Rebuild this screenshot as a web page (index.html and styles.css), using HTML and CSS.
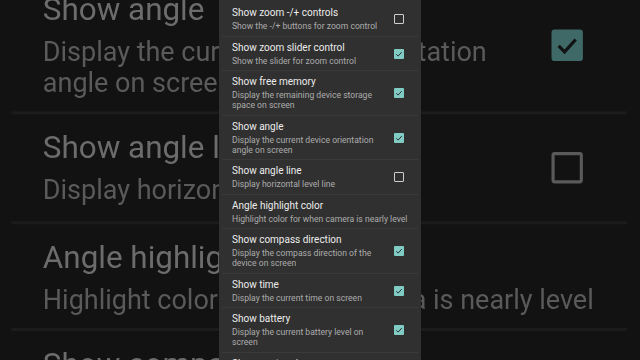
FILE: index.html
```html
<!DOCTYPE html>
<html lang="en">
<head>
    <meta charset="UTF-8">
    <meta name="viewport" content="width=device-width, initial-scale=1.0">
    <title>On screen GUI</title>
    <link rel="stylesheet" href="styles.css">
</head>
<body>
    <div class="backdrop" id="backdrop"></div>
    <div class="settings-list" id="settingsList">
        <div class="pref">
            <div class="pref-text">
                <div class="pref-title">Show zoom -/+ controls</div>
                <div class="pref-summary">Show the -/+ buttons for zoom control</div>
            </div>
            <span class="checkbox"></span>
        </div>
        <div class="pref">
            <div class="pref-text">
                <div class="pref-title">Show zoom slider control</div>
                <div class="pref-summary">Show the slider for zoom control</div>
            </div>
            <span class="checkbox checked"><svg viewBox="0 0 24 24"><path d="M5.5 12.5l4.5 4.5 8.5-9.5"/></svg></span>
        </div>
        <div class="pref">
            <div class="pref-text">
                <div class="pref-title">Show free memory</div>
                <div class="pref-summary">Display the remaining device storage space on screen</div>
            </div>
            <span class="checkbox checked"><svg viewBox="0 0 24 24"><path d="M5.5 12.5l4.5 4.5 8.5-9.5"/></svg></span>
        </div>
        <div class="pref">
            <div class="pref-text">
                <div class="pref-title">Show angle</div>
                <div class="pref-summary">Display the current device orientation angle on screen</div>
            </div>
            <span class="checkbox checked"><svg viewBox="0 0 24 24"><path d="M5.5 12.5l4.5 4.5 8.5-9.5"/></svg></span>
        </div>
        <div class="pref">
            <div class="pref-text">
                <div class="pref-title">Show angle line</div>
                <div class="pref-summary">Display horizontal level line</div>
            </div>
            <span class="checkbox"></span>
        </div>
        <div class="pref">
            <div class="pref-text">
                <div class="pref-title">Angle highlight color</div>
                <div class="pref-summary">Highlight color for when camera is nearly level</div>
            </div>
        </div>
        <div class="pref">
            <div class="pref-text">
                <div class="pref-title">Show compass direction</div>
                <div class="pref-summary">Display the compass direction of the device on screen</div>
            </div>
            <span class="checkbox checked"><svg viewBox="0 0 24 24"><path d="M5.5 12.5l4.5 4.5 8.5-9.5"/></svg></span>
        </div>
        <div class="pref">
            <div class="pref-text">
                <div class="pref-title">Show time</div>
                <div class="pref-summary">Display the current time on screen</div>
            </div>
            <span class="checkbox checked"><svg viewBox="0 0 24 24"><path d="M5.5 12.5l4.5 4.5 8.5-9.5"/></svg></span>
        </div>
        <div class="pref">
            <div class="pref-text">
                <div class="pref-title">Show battery</div>
                <div class="pref-summary">Display the current battery level on screen</div>
            </div>
            <span class="checkbox checked"><svg viewBox="0 0 24 24"><path d="M5.5 12.5l4.5 4.5 8.5-9.5"/></svg></span>
        </div>
        <div class="pref">
            <div class="pref-text">
                <div class="pref-title">Show geotagging</div>
                <div class="pref-summary">Display whether location is being recorded</div>
            </div>
            <span class="checkbox checked"><svg viewBox="0 0 24 24"><path d="M5.5 12.5l4.5 4.5 8.5-9.5"/></svg></span>
        </div>
    </div>

    <script>
        // the blown-up, dimmed copy of the list behind the phone frame
        const copy = document.getElementById('settingsList').cloneNode(true);
        copy.removeAttribute('id');
        document.getElementById('backdrop').appendChild(copy);
    </script>
</body>
</html>
```

FILE: styles.css
```css
html, body {
    margin: 0;
    height: 100%;
}
body {
    display: flex;
    justify-content: center;
    background: #121212;
    font-family: Roboto, 'Noto Sans', sans-serif;
    overflow: hidden;
}
.settings-list {
    position: relative;
    z-index: 1;
    width: 202px;
    height: 360px;
    padding-top: 2px;
    box-sizing: border-box;
    background: #303030;
    overflow: hidden;
}
.pref {
    display: flex;
    align-items: center;
    margin: 0 3px;
    padding: 5px 7px 4.5px 10px;
    border-bottom: 1px solid #3a3a3a;
}
.pref-text {
    flex: 1;
    min-width: 0;
}
.pref-title {
    font-size: 10px;
    line-height: 12px;
    color: #ececec;
}
.pref-summary {
    margin-top: 2px;
    font-size: 8.6px;
    line-height: 10px;
    color: #acacac;
}
.checkbox {
    flex: none;
    width: 10px;
    height: 10px;
    margin: 0 7px 0 8px;
    box-sizing: border-box;
    border: 1.5px solid #cfcfcf;
    border-radius: 1px;
}
.checkbox.checked {
    background: #80cbc4;
    border: none;
}
.checkbox svg {
    display: block;
    width: 10px;
    height: 10px;
    fill: none;
    stroke: #263238;
    stroke-width: 2.4;
}

/* blurred zoomed copy behind */
.backdrop {
    position: absolute;
    left: 0;
    top: 0;
    transform-origin: 0 0;
    transform: translate(2px, -388px) scale(3.14);
    filter: blur(0.25px);
}
.backdrop .settings-list {
    background: #121212;
}
.backdrop .pref {
    border-bottom-color: #1c1c1c;
}
.backdrop .pref-title {
    color: #6c6c6c;
}
.backdrop .pref-summary {
    color: #5a5a5a;
}
.backdrop .checkbox {
    border-color: #5a5a5a;
}
.backdrop .checkbox.checked {
    background: #3e6967;
}
.backdrop .checkbox svg {
    stroke: #121212;
}
```
